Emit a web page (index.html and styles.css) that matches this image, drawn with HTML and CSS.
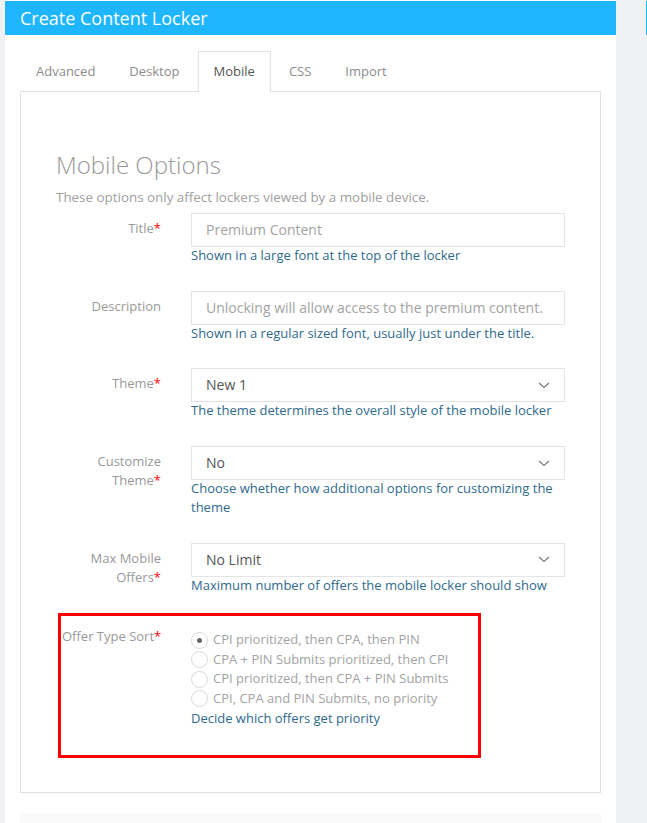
FILE: index.html
```html
<!DOCTYPE html>
<html>
<head>
<meta charset="utf-8">
<link rel="stylesheet" href="styles.css">
</head>
<body>
<div class="page">
  <div class="card">
    <div class="card-head">Create Content Locker</div>
    <div class="card-body">
      <ul class="tabs">
        <li>Advanced</li>
        <li>Desktop</li>
        <li class="active">Mobile</li>
        <li>CSS</li>
        <li>Import</li>
      </ul>
      <div class="tab-pane">
        <h2 class="pane-title">Mobile Options</h2>
        <p class="lead">These options only affect lockers viewed by a mobile device.</p>

        <div class="row">
          <div class="lbl">Title<span class="req">*</span></div>
          <div class="field">
            <div class="control placeholder">Premium Content</div>
            <div class="help">Shown in a large font at the top of the locker</div>
          </div>
        </div>

        <div class="row">
          <div class="lbl">Description</div>
          <div class="field">
            <div class="control placeholder">Unlocking will allow access to the premium content.</div>
            <div class="help">Shown in a regular sized font, usually just under the title.</div>
          </div>
        </div>

        <div class="row">
          <div class="lbl">Theme<span class="req">*</span></div>
          <div class="field">
            <div class="control select"><span>New 1</span><svg class="chev" width="12" height="7" viewBox="0 0 12 7"><path d="M1 1l5 4.5L11 1" fill="none" stroke="#777" stroke-width="1.1"/></svg></div>
            <div class="help">The theme determines the overall style of the mobile locker</div>
          </div>
        </div>

        <div class="row">
          <div class="lbl">Customize<br>Theme<span class="req">*</span></div>
          <div class="field">
            <div class="control select"><span>No</span><svg class="chev" width="12" height="7" viewBox="0 0 12 7"><path d="M1 1l5 4.5L11 1" fill="none" stroke="#777" stroke-width="1.1"/></svg></div>
            <div class="help">Choose whether how additional options for customizing the theme</div>
          </div>
        </div>

        <div class="row">
          <div class="lbl">Max Mobile<br>Offers<span class="req">*</span></div>
          <div class="field">
            <div class="control select"><span>No Limit</span><svg class="chev" width="12" height="7" viewBox="0 0 12 7"><path d="M1 1l5 4.5L11 1" fill="none" stroke="#777" stroke-width="1.1"/></svg></div>
            <div class="help">Maximum number of offers the mobile locker should show</div>
          </div>
        </div>

        <div class="highlight">
          <div class="lbl-left">Offer Type Sort<span class="req">*</span></div>
          <div class="radios">
            <div class="radio"><span class="circle checked"></span>CPI prioritized, then CPA, then PIN</div>
            <div class="radio"><span class="circle"></span>CPA + PIN Submits prioritized, then CPI</div>
            <div class="radio"><span class="circle"></span>CPI prioritized, then CPA + PIN Submits</div>
            <div class="radio"><span class="circle"></span>CPI, CPA and PIN Submits, no priority</div>
            <div class="help help-r">Decide which offers get priority</div>
          </div>
        </div>
      </div>
      <div class="footer-bar"></div>
    </div>
  </div>
  <div class="side-card"><div class="side-head"></div></div>
</div>
</body>
</html>
```

FILE: styles.css
```css
html, body {
  margin: 0;
  padding: 0;
  background: #f0f1f5;
  font-family: "Open Sans", "Noto Sans", sans-serif;
  overflow: hidden;
}
.page {
  display: flex;
  height: 823px;
  padding-left: 5px;
  overflow: hidden;
}
.card {
  width: 611px;
  flex: none;
  background: #fff;
}
.card-head {
  margin-top: 1px;
  height: 34px;
  background: #1eb6ff;
  color: #fff;
  font-size: 18px;
  line-height: 34px;
  padding-left: 15px;
}
.card-body {
  padding: 16px 15px 0 15px;
}
.tabs {
  list-style: none;
  margin: 0;
  padding: 0;
  display: flex;
  position: relative;
  z-index: 1;
}
.tabs li {
  padding: 10px 15px;
  margin-right: 2px;
  border: 1px solid transparent;
  border-bottom: none;
  font-size: 13px;
  line-height: 19px;
  color: #8c8c8c;
}
.tabs li.active {
  border-color: #e1e1e1;
  background: #fff;
  color: #555;
  padding-bottom: 10px;
  margin-bottom: -1px;
}
.tab-pane {
  border: 1px solid #e1e1e1;
  padding: 58px 35px 34px 35px;
}
.pane-title {
  margin: 0;
  font-size: 24px;
  font-weight: 300;
  line-height: 30px;
  color: #999;
}
.lead {
  margin: 8px 0 6px 0;
  font-size: 13.4px;
  line-height: 19px;
  color: #a0a0a0;
}
.row {
  display: grid;
  grid-template-columns: 105px 374px;
  column-gap: 30px;
  margin-bottom: 25.7px;
}
.lbl {
  text-align: right;
  padding-top: 6px;
  font-size: 13px;
  line-height: 19px;
  color: #999;
}
.req {
  color: #f00;
}
.control {
  box-sizing: border-box;
  height: 34px;
  border: 1px solid #e4e4e4;
  padding: 0 14px;
  font-size: 14px;
  line-height: 32px;
  color: #555;
  white-space: nowrap;
  overflow: hidden;
}
.placeholder {
  color: #a3a3a3;
}
.select {
  display: flex;
  align-items: center;
  justify-content: space-between;
  padding-right: 14px;
}
.chev {
  display: block;
}
.help {
  margin-top: -1px;
  font-size: 13px;
  line-height: 19px;
  color: #2f6a8c;
}
.highlight {
  box-sizing: border-box;
  width: 423px;
  height: 145px;
  margin: -7px 0 0 2px;
  border: 3px solid #ff0000;
  display: grid;
  grid-template-columns: 130px 1fr;
}
.lbl-left {
  padding: 11px 0 0 1px;
  font-size: 13px;
  line-height: 19px;
  color: #999;
}
.radios {
  padding-top: 14px;
}
.radio {
  display: flex;
  align-items: center;
  font-size: 13px;
  line-height: 19.5px;
  color: #a3a3a3;
}
.circle {
  box-sizing: border-box;
  width: 17px;
  height: 17px;
  border: 1px solid #d9d9d9;
  border-radius: 50%;
  margin-right: 5px;
  display: flex;
  align-items: center;
  justify-content: center;
  flex: none;
}
.circle.checked::after {
  content: "";
  width: 5px;
  height: 5px;
  border-radius: 50%;
  background: #666;
}
.help-r {
  margin-top: 1px;
}
.footer-bar {
  margin-top: 20px;
  height: 20px;
  background: #f9f9f9;
}
.side-card {
  margin-left: 30px;
  flex: 1;
}
.side-head {
  margin-top: 1px;
  height: 34px;
  background: #1eb6ff;
}
```
